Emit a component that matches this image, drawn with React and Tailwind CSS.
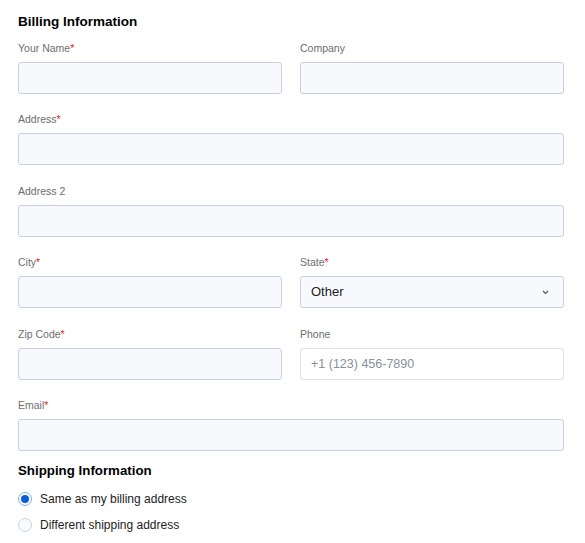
import React from 'react';

const Label = ({ children, required }) => (
  <div className="text-[10.5px] leading-[14px] text-[#6e6e6e] mb-[7px]">
    {children}
    {required && <span className="text-[#e02424]">*</span>}
  </div>
);

const inputClass =
  'block w-full h-[32px] rounded-[3px] border border-[#c7d0db] bg-[#f8f9fd] px-[10px] text-[13px] text-[#222] outline-none';

const Field = ({ label, required, children }) => (
  <div className="flex-1 min-w-0">
    <Label required={required}>{label}</Label>
    {children || <input className={inputClass} />}
  </div>
);

const Radio = ({ checked, label }) => (
  <label className="flex items-center gap-[8px] h-[26px] text-[12px] text-[#222]">
    {checked ? (
      <span className="w-[14px] h-[14px] rounded-full border border-[#7fb0ee] bg-white flex items-center justify-center">
        <span className="w-[8px] h-[8px] rounded-full bg-[#0a5ed7]" />
      </span>
    ) : (
      <span className="w-[14px] h-[14px] rounded-full border border-[#c6d3e4] bg-[#f8faff]" />
    )}
    <span>{label}</span>
  </label>
);

export default function App() {
  return (
    <div className="bg-white pl-[18px] pr-[21px] pt-[13px] pb-[8px] w-[585px]" style={{ fontFamily: '"Liberation Sans", Arial, sans-serif' }}>
      <h2 className="text-[13.5px] leading-[17px] font-bold text-black mb-[11px]">Billing Information</h2>

      <div className="flex flex-col gap-[18.4px]">
        <div className="flex gap-[18px]">
          <Field label="Your Name" required />
          <Field label="Company" />
        </div>
        <Field label="Address" required />
        <Field label="Address 2" />
        <div className="flex gap-[18px]">
          <Field label="City" required />
          <Field label="State" required>
            <div className={inputClass + ' flex items-center justify-between'}>
              <span>Other</span>
              <svg width="7" height="5" viewBox="0 0 7 5" className="mr-[4px]">
                <path d="M1 1l2.5 2.5L6 1" fill="none" stroke="#555" strokeWidth="1.1" />
              </svg>
            </div>
          </Field>
        </div>
        <div className="flex gap-[18px]">
          <Field label="Zip Code" required />
          <Field label="Phone">
            <input
              className="block w-full h-[32px] rounded-[3px] border border-[#dde1e6] bg-white px-[10px] text-[12.5px] text-[#222] placeholder:text-[#8b9099] outline-none"
              placeholder="+1 (123) 456-7890"
            />
          </Field>
        </div>
        <Field label="Email" required />
      </div>

      <h2 className="text-[13.3px] leading-[17px] font-bold text-black mt-[11px] mb-[7px]">Shipping Information</h2>
      <Radio checked label="Same as my billing address" />
      <Radio label="Different shipping address" />
    </div>
  );
}
